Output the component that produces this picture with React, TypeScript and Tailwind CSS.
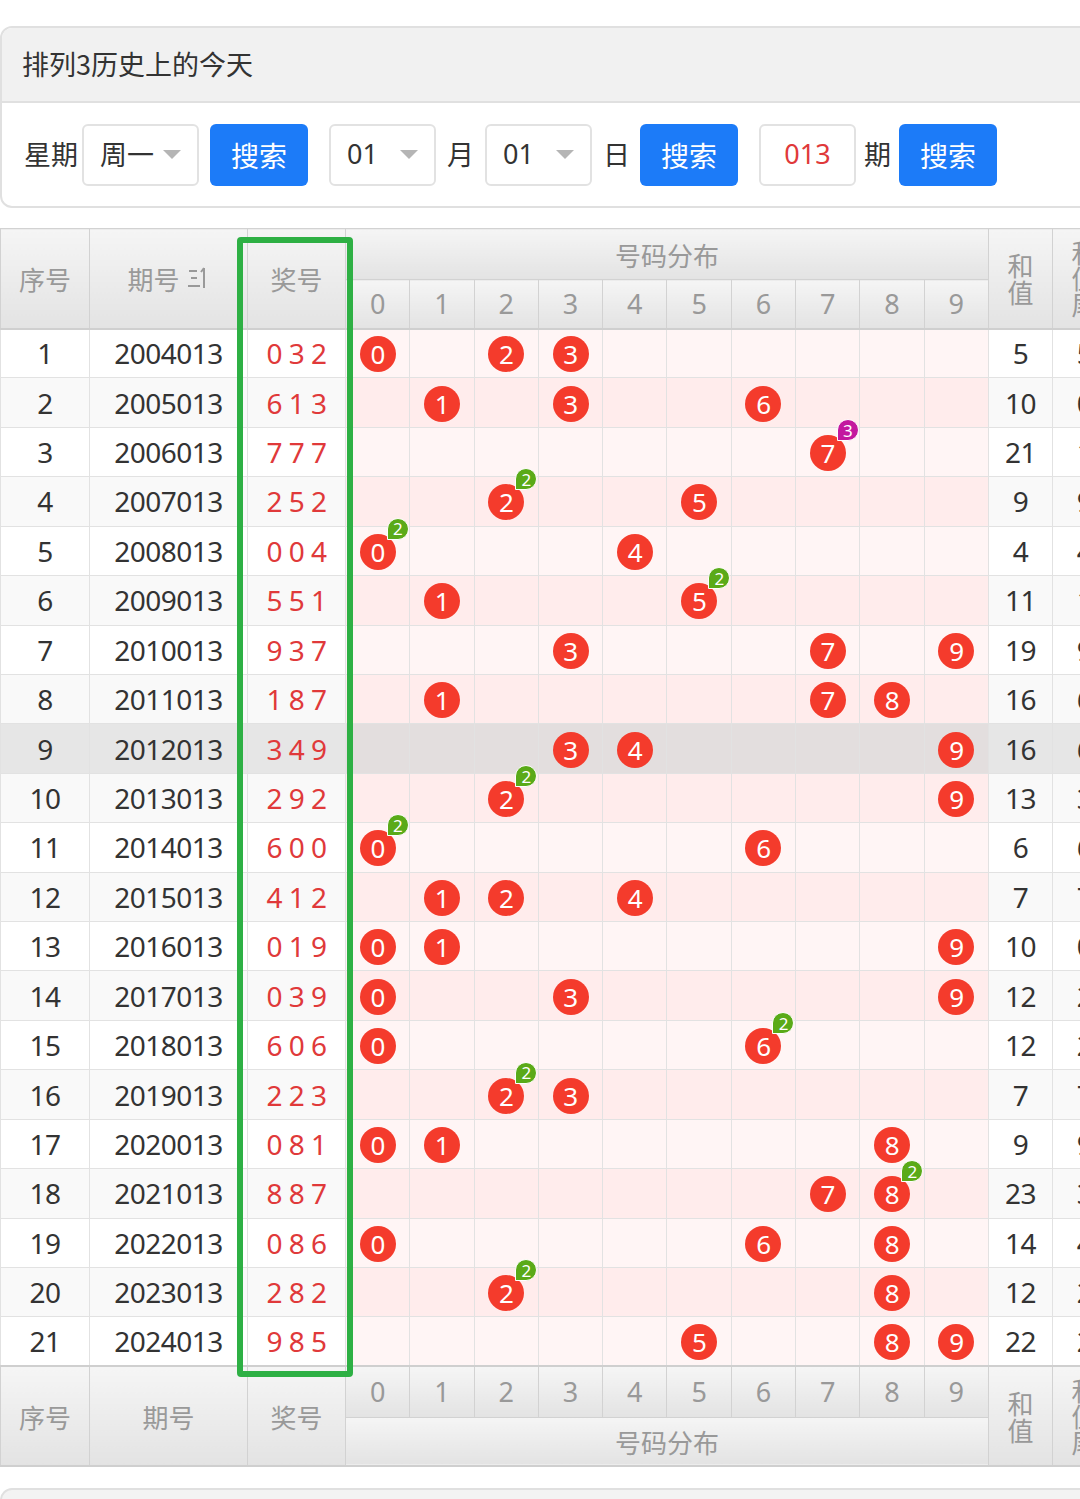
import React from "react";

type Row = { period: string; code: string };

const rows: Row[] = [
  { period: "2004013", code: "032" },
  { period: "2005013", code: "613" },
  { period: "2006013", code: "777" },
  { period: "2007013", code: "252" },
  { period: "2008013", code: "004" },
  { period: "2009013", code: "551" },
  { period: "2010013", code: "937" },
  { period: "2011013", code: "187" },
  { period: "2012013", code: "349" },
  { period: "2013013", code: "292" },
  { period: "2014013", code: "600" },
  { period: "2015013", code: "412" },
  { period: "2016013", code: "019" },
  { period: "2017013", code: "039" },
  { period: "2018013", code: "606" },
  { period: "2019013", code: "223" },
  { period: "2020013", code: "081" },
  { period: "2021013", code: "887" },
  { period: "2022013", code: "086" },
  { period: "2023013", code: "282" },
  { period: "2024013", code: "985" },
];

const digits = [0, 1, 2, 3, 4, 5, 6, 7, 8, 9];
const cjk = { fontFamily: '"Noto Sans CJK SC", "Noto Sans", sans-serif' };
const num = { fontFamily: '"Noto Sans", "Noto Sans CJK SC", sans-serif' };
const head = "border border-[#d2d2d2] bg-linear-to-b from-[#f5f5f5] to-[#e3e3e3] font-normal text-[#999]";

function Caret() {
  return (
    <svg width="18" height="10" viewBox="0 0 18 10">
      <polygon points="0,0 18,0 9,9" fill="#b5b5b5" />
    </svg>
  );
}

function SortIcon() {
  return (
    <svg width="24" height="26" viewBox="0 0 24 26" fill="none" stroke="currentColor" strokeWidth="2">
      <path d="M3 6h8M5 13h6M2 21h12" />
      <path d="M18 3v20M18 3l-3 4" />
    </svg>
  );
}

function Ball({ n, count }: { n: number; count: number }) {
  return (
    <span className="relative inline-flex h-[36px] w-[36px] items-center justify-center rounded-full bg-[#f43b2c] text-[26px] leading-none text-white">
      {n}
      {count > 1 ? (
        <span
          className={`absolute left-[27px] top-[-16px] flex h-[22px] w-[22px] items-center justify-center rounded-full rounded-bl-none border border-white text-[17px] leading-none text-white ${
            count > 2 ? "bg-[#c3199f]" : "bg-[#5aaa18]"
          }`}
        >
          {count}
        </span>
      ) : null}
    </span>
  );
}

function SearchBtn() {
  return (
    <button className="h-[62px] w-[98px] rounded-[6px] bg-[#1c7bf8] text-[28px] text-white" style={cjk}>
      搜索
    </button>
  );
}

function Select({ value, w }: { value: string; w: string }) {
  return (
    <div className={`flex h-[62px] items-center justify-between rounded-[6px] border-2 border-[#e2e2e2] pl-[16px] pr-[16px] text-[27px] text-[#333] ${w}`}>
      <span>{value}</span>
      <Caret />
    </div>
  );
}

export default function App() {
  return (
    <div className="h-[1499px] w-[1080px] overflow-hidden bg-white pt-[26px] text-[#333]" style={num}>
      <div className="w-[1120px] overflow-hidden rounded-[12px] border-2 border-[#e0e0e0]">
        <div className="flex h-[75px] items-center border-b-2 border-[#e0e0e0] bg-[#f1f1f1] pl-[20px] text-[27px]" style={cjk}>
          排列3历史上的今天
        </div>
        <div className="flex h-[103px] items-center pl-[22px] text-[27px]">
          <span className="mr-[4px]" style={cjk}>星期</span>
          <div style={cjk}>
            <Select value="周一" w="w-[117px]" />
          </div>
          <div className="ml-[11px]">
            <SearchBtn />
          </div>
          <div className="ml-[21px]">
            <Select value="01" w="w-[107px]" />
          </div>
          <span className="mx-[11px]" style={cjk}>月</span>
          <Select value="01" w="w-[107px]" />
          <span className="ml-[11px] mr-[10px]" style={cjk}>日</span>
          <SearchBtn />
          <div className="ml-[21px] flex h-[62px] w-[97px] items-center justify-center rounded-[6px] border-2 border-[#e2e2e2] text-[27px] text-[#e0393a]">
            013
          </div>
          <span className="mx-[8px]" style={cjk}>期</span>
          <SearchBtn />
        </div>
      </div>

      <div className="relative mt-[20px] w-[1116px]">
        <table className="w-[1116px] table-fixed border-collapse text-center">
          <colgroup>
            <col className="w-[89px]" />
            <col className="w-[158px]" />
            <col className="w-[98px]" />
            {digits.map((d) => (
              <col key={d} className="w-[64.3px]" />
            ))}
            <col className="w-[64px]" />
            <col className="w-[64px]" />
          </colgroup>
          <thead>
            <tr className="h-[51px]">
              <th rowSpan={2} className={`${head} text-[26px]`} style={cjk}>序号</th>
              <th rowSpan={2} className={`${head} text-[26px] text-[#6ea2e4]`} style={cjk}>
                <span className="inline-flex items-center gap-[6px]">
                  期号
                  <SortIcon />
                </span>
              </th>
              <th rowSpan={2} className={`${head} text-[26px]`} style={cjk}>奖号</th>
              <th colSpan={10} className={`${head} text-[26px]`} style={cjk}>号码分布</th>
              <th rowSpan={2} className={`${head} text-[26px] leading-[27px]`} style={cjk}>和<br />值</th>
              <th rowSpan={2} className={`${head} text-[26px] leading-[26px]`} style={cjk}>和<br />值<br />尾</th>
            </tr>
            <tr className="h-[49px] border-b-2 border-[#cfcfcf]">
              {digits.map((d) => (
                <th key={d} className={`${head} text-[27px]`}>{d}</th>
              ))}
            </tr>
          </thead>
          <tbody>
            {rows.map((r, i) => {
              const nums = r.code.split("").map(Number);
              const sum = nums.reduce((a, b) => a + b, 0);
              const odd = i % 2 === 0;
              const hot = i === 8;
              const side = hot ? "bg-[#e6e6e6]" : odd ? "bg-white" : "bg-[#f9f9f9]";
              const pink = hot ? "bg-[#e3dede]" : odd ? "bg-[#fff5f5]" : "bg-[#ffecec]";
              return (
                <tr key={r.period} className="h-[49.43px] text-[28px] tracking-[-0.5px]">
                  <td className={`border border-[#e2e2e2] ${side}`}>{i + 1}</td>
                  <td className={`border border-[#e2e2e2] ${side}`}>{r.period}</td>
                  <td className={`border border-[#e2e2e2] ${side} text-[#e0393a]`}>{nums.join(" ")}</td>
                  {digits.map((d) => {
                    const count = nums.filter((x) => x === d).length;
                    return (
                      <td key={d} className={`border border-[#e2e2e2] p-0 ${pink}`}>
                        {count > 0 ? <Ball n={d} count={count} /> : null}
                      </td>
                    );
                  })}
                  <td className={`border border-[#e2e2e2] ${side}`}>{sum}</td>
                  <td className={`border border-[#e2e2e2] ${side}`}>{sum % 10}</td>
                </tr>
              );
            })}
          </tbody>
          <tfoot>
            <tr className="h-[51px] border-t-2 border-[#cfcfcf]">
              <th rowSpan={2} className={`${head} text-[26px]`} style={cjk}>序号</th>
              <th rowSpan={2} className={`${head} text-[26px]`} style={cjk}>期号</th>
              <th rowSpan={2} className={`${head} text-[26px]`} style={cjk}>奖号</th>
              {digits.map((d) => (
                <th key={d} className={`${head} text-[27px]`}>{d}</th>
              ))}
              <th rowSpan={2} className={`${head} text-[26px] leading-[27px]`} style={cjk}>和<br />值</th>
              <th rowSpan={2} className={`${head} text-[26px] leading-[26px]`} style={cjk}>和<br />值<br />尾</th>
            </tr>
            <tr className="h-[49px] border-b-2 border-[#cfcfcf]">
              <th colSpan={10} className={`${head} text-[26px]`} style={cjk}>号码分布</th>
            </tr>
          </tfoot>
        </table>
        <div className="pointer-events-none absolute left-[237px] top-[9px] h-[1140px] w-[116px] rounded-[4px] border-[6px] border-[#2eb044]" />
      </div>

      <div className="mt-[21px] h-[40px] w-[1120px] rounded-[12px] border-2 border-[#e0e0e0] bg-[#f3f3f3]" />
    </div>
  );
}
